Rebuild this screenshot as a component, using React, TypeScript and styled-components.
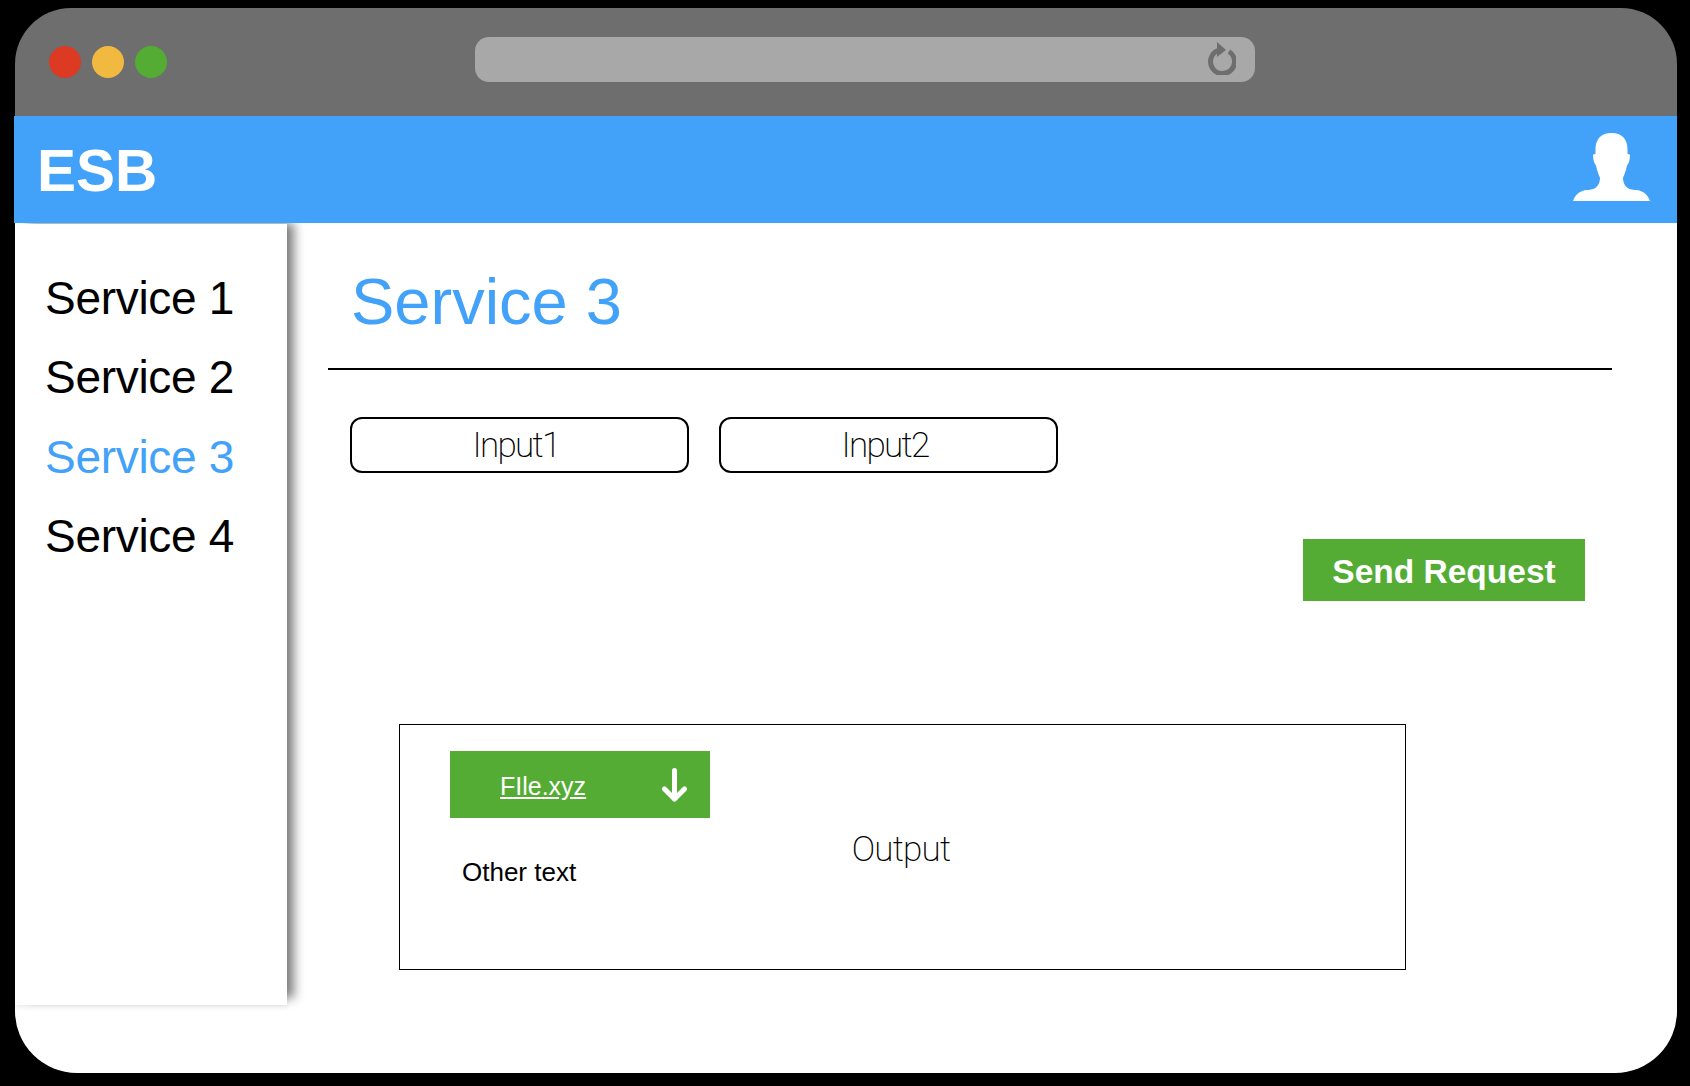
import React from "react"
import styled, { createGlobalStyle } from "styled-components"

const GlobalStyle = createGlobalStyle`
    html, body {
        margin: 0;
        padding: 0;
        background: #000;
    }

    body {
        font-family: "Liberation Sans", Arial, sans-serif;
    }
`

const Page = styled.div`
    width: 1690px;
    height: 1086px;
    padding: 8px 13px 13px 15px;
    box-sizing: border-box;
    display: flex;
    flex-direction: column;
    overflow: hidden;
`

const Chrome = styled.div`
    height: 108px;
    flex: none;
    background: #6e6e6e;
    border-radius: 56px 56px 0 0;
    display: flex;
    align-items: flex-start;
    padding: 29px 0 0 34px;
    box-sizing: border-box;
`

const Lights = styled.div`
    display: flex;
    gap: 11px;
    margin-top: 9px;
`

const Light = styled.span<{ color: string }>`
    width: 32px;
    height: 32px;
    border-radius: 50%;
    background: ${props => props.color};
`

const UrlBar = styled.div`
    width: 780px;
    height: 45px;
    margin-left: 308px;
    border-radius: 14px;
    background: #a8a8a8;
    display: flex;
    justify-content: flex-end;
    padding: 5px 19px 0 0;
    box-sizing: border-box;
`

const Header = styled.div`
    position: relative;
    z-index: 1;
    height: 107px;
    flex: none;
    margin-left: -1px;
    background: #42a1f8;
    display: flex;
    align-items: center;
    justify-content: space-between;
    padding: 0 27px 0 23px;
    box-sizing: border-box;
`

const Logo = styled.div`
    font-size: 58.5px;
    font-weight: 700;
    color: #fff;
    padding-top: 2px;
`

const UserSvg = styled.svg`
    margin-bottom: 5px;
`

const Body = styled.div`
    flex: 1;
    background: #fff;
    border-radius: 0 0 62px 62px;
    display: flex;
    align-items: flex-start;
`

const Sidebar = styled.nav`
    width: 272px;
    height: 781px;
    margin-top: 1px;
    padding-top: 34px;
    box-sizing: border-box;
    background: #fff;
    flex: none;
    box-shadow: 10px -4px 10px -3px rgba(0, 0, 0, 0.5), 0 2px 5px rgba(0, 0, 0, 0.08);
`

const NavItem = styled.div<{ active?: boolean }>`
    height: 79.3px;
    line-height: 80px;
    padding-left: 30px;
    font-size: 46px;
    letter-spacing: -0.3px;
    color: ${props => (props.active ? "#42a1f8" : "#000")};
`

const Main = styled.main`
    flex: 1;
    padding: 0 65px 0 41px;
`

const Title = styled.h1`
    margin: 0;
    padding: 36px 0 0 23px;
    height: 147px;
    box-sizing: border-box;
    border-bottom: 2px solid #000;
    font-size: 65px;
    font-weight: 400;
    line-height: 86px;
    color: #42a1f8;
`

const Inputs = styled.div`
    display: flex;
    gap: 30px;
    padding: 47px 0 0 22px;
`

const InputBox = styled.div`
    width: 339px;
    height: 56px;
    box-sizing: border-box;
    border: 2px solid #000;
    border-radius: 12px;
    padding: 1px 7px 0 0;
    display: flex;
    align-items: center;
    justify-content: center;
    font-family: Roboto, sans-serif;
    font-weight: 200;
    font-size: 35px;
    letter-spacing: -1.7px;
`

const Actions = styled.div`
    display: flex;
    justify-content: flex-end;
    padding: 66px 27px 0 0;
`

const SendButton = styled.div`
    width: 282px;
    height: 62px;
    padding-top: 4px;
    box-sizing: border-box;
    background: #54ac34;
    color: #fff;
    font-size: 33.5px;
    font-weight: 700;
    display: flex;
    align-items: center;
    justify-content: center;
`

const OutputBox = styled.section`
    width: 1007px;
    height: 246px;
    margin: 123px 0 0 71px;
    box-sizing: border-box;
    border: 1px solid #000;
    display: grid;
    grid-template-columns: 1fr auto 1fr;
    align-items: center;
`

const FileColumn = styled.div`
    align-self: start;
    padding: 26px 0 0 50px;
`

const FileButton = styled.a`
    width: 260px;
    height: 67px;
    background: #54ac34;
    color: #fff;
    display: flex;
    align-items: center;
    justify-content: space-between;
    padding: 0 23px 0 50px;
    box-sizing: border-box;
    font-size: 25px;
    text-decoration: underline;
`

const FileName = styled.span`
    padding-top: 4px;
`

const OtherText = styled.div`
    margin: 39px 0 0 12px;
    font-size: 26px;
`

const OutputLabel = styled.div`
    font-family: Roboto, sans-serif;
    font-weight: 200;
    font-size: 35px;
    letter-spacing: -0.8px;
    padding: 4px 3px 0 0;
`

const ReloadIcon = () => (
    <svg width="29" height="33" viewBox="0 0 29 33">
        <path
            d="M11 8.5 A12 12 0 1 0 22 9.5"
            fill="none"
            stroke="#6e6e6e"
            strokeWidth="5"
        />
        <path d="M10 0 L19 8 L10 15 Z" fill="#6e6e6e" />
    </svg>
)

const UserIcon = () => (
    <UserSvg width="77" height="68" viewBox="0 0 77 67" preserveAspectRatio="none">
        <path
            fill="#fff"
            d="M38.5 0 C49 0 54.5 6 54.5 16 L54.5 20.5 L57 21.5 C57 26 56 30 54 32 C53 37 51.5 41 50 44 C50 50 53 55 60 56 C68 56 74 59 77 67 L0 67 C3 59 9 56 17 56 C24 55 27 50 27 44 C25.5 41 24 37 23 32 C21 30 20 26 20 21.5 L22.5 20.5 L22.5 16 C22.5 6 28 0 38.5 0 Z"
        />
    </UserSvg>
)

const DownArrow = () => (
    <svg width="25" height="34" viewBox="0 0 25 34">
        <path
            d="M12.5 2.5 L12.5 31 M2.5 21 L12.5 31 L22.5 21"
            fill="none"
            stroke="#fff"
            strokeWidth="5"
            strokeLinecap="round"
            strokeLinejoin="round"
        />
    </svg>
)

const services = ["Service 1", "Service 2", "Service 3", "Service 4"]

export default function App() {
    return (
        <Page>
            <GlobalStyle />
            <Chrome>
                <Lights>
                    <Light color="#dd3a24" />
                    <Light color="#f2b940" />
                    <Light color="#54ac34" />
                </Lights>
                <UrlBar>
                    <ReloadIcon />
                </UrlBar>
            </Chrome>
            <Header>
                <Logo>ESB</Logo>
                <UserIcon />
            </Header>
            <Body>
                <Sidebar>
                    {services.map(name => (
                        <NavItem key={name} active={name === "Service 3"}>
                            {name}
                        </NavItem>
                    ))}
                </Sidebar>
                <Main>
                    <Title>Service 3</Title>
                    <Inputs>
                        <InputBox>Input1</InputBox>
                        <InputBox>Input2</InputBox>
                    </Inputs>
                    <Actions>
                        <SendButton>Send Request</SendButton>
                    </Actions>
                    <OutputBox>
                        <FileColumn>
                            <FileButton>
                                <FileName>FIle.xyz</FileName>
                                <DownArrow />
                            </FileButton>
                            <OtherText>Other text</OtherText>
                        </FileColumn>
                        <OutputLabel>Output</OutputLabel>
                    </OutputBox>
                </Main>
            </Body>
        </Page>
    )
}
